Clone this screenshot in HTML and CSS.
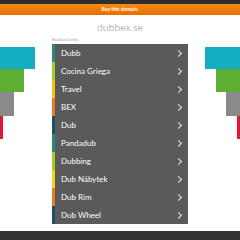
FILE: index.html
```html
<!DOCTYPE html>
<html>
<head>
<meta charset="utf-8">
<link rel="stylesheet" href="styles.css">
</head>
<body>
<div class="topbar"></div>
<div class="buybar">Buy this domain.</div>
<div class="main">
  <div class="deco deco-left">
    <div class="bar cyan w35"></div>
    <div class="bar green w24"></div>
    <div class="bar gray w14"></div>
    <div class="bar red w3"></div>
  </div>
  <div class="center">
    <div class="domain">dubbex.se</div>
    <div class="related">Related Links</div>
    <ul class="links">
      <li class="c1"><span>Dubb</span><i class="chev"></i></li>
      <li class="c2"><span>Cocina Griega</span><i class="chev"></i></li>
      <li class="c3"><span>Travel</span><i class="chev"></i></li>
      <li class="c4"><span>BEX</span><i class="chev"></i></li>
      <li class="c5"><span>Dub</span><i class="chev"></i></li>
      <li class="c6"><span>Pandadub</span><i class="chev"></i></li>
      <li class="c7"><span>Dubbing</span><i class="chev"></i></li>
      <li class="c8"><span>Dub Nábytek</span><i class="chev"></i></li>
      <li class="c9"><span>Dub Rim</span><i class="chev"></i></li>
      <li class="c10"><span>Dub Wheel</span><i class="chev"></i></li>
    </ul>
  </div>
  <div class="deco deco-right">
    <div class="bar cyan w35"></div>
    <div class="bar green w24"></div>
    <div class="bar gray w14"></div>
    <div class="bar red w3"></div>
  </div>
</div>
<div class="bottombar"></div>
</body>
</html>
```
FILE: styles.css
```css
html, body {
  margin: 0;
  padding: 0;
  background: #fff;
  width: 240px;
  height: 240px;
  overflow: hidden;
  font-family: "Lato", "Open Sans", sans-serif;
}
.topbar {
  height: 4px;
  background: #2e2e2e;
}
.buybar {
  height: 11px;
  background: linear-gradient(#f58a12, #ea6d00);
  color: #fff;
  font-size: 5px;
  font-weight: bold;
  text-align: center;
  line-height: 11px;
}
.main {
  display: grid;
  grid-template-columns: 52px 136px 52px;
  height: 216px;
}
.deco {
  display: flex;
  flex-direction: column;
  padding-top: 32px;
}
.deco-left { align-items: flex-start; }
.deco-right { align-items: flex-end; }
.bar { height: 23px; flex: none; }
.bar.cyan { background: #14aec3; height: 22px; }
.bar.green { background: #5daf33; }
.bar.gray { background: #8a8a8a; height: 24px; }
.bar.red { background: #e0163b; }
.w35 { width: 35px; }
.w24 { width: 24px; }
.w14 { width: 14px; }
.w3 { width: 3px; }
.center {
  display: flex;
  flex-direction: column;
}
.domain {
  text-align: center;
  color: #8a8a8a;
  font-size: 10.5px;
  font-weight: 300;
  height: 13px;
  line-height: 13px;
  margin-top: 6px;
}
.related {
  font-size: 4.5px;
  color: #a0a0a0;
  height: 9px;
  line-height: 9px;
  margin-top: 1px;
}
.links {
  list-style: none;
  margin: 0;
  padding: 0;
  background: #5a5a5a;
}
.links li {
  height: 18px;
  display: flex;
  align-items: center;
  justify-content: space-between;
  border-left: 3px solid #2a7d70;
  padding-left: 6px;
  padding-right: 7px;
  color: #fff;
  font-size: 8px;
}
.chev {
  width: 4px;
  height: 4px;
  border-top: 1px solid #e6e6e6;
  border-right: 1px solid #e6e6e6;
  transform: rotate(45deg);
}
.links .c1 { border-left-color: #2a8a78; }
.links .c2 { border-left-color: #9ccc2e; }
.links .c3 { border-left-color: #f0c419; }
.links .c4 { border-left-color: #ea7a1c; }
.links .c5 { border-left-color: #1c4f6a; }
.links .c6 { border-left-color: #2a8a78; }
.links .c7 { border-left-color: #a6c92f; }
.links .c8 { border-left-color: #f0d219; }
.links .c9 { border-left-color: #ea7a1c; }
.links .c10 { border-left-color: #1c4f6a; }
.bottombar {
  height: 9px;
  background: #333;
}
```
